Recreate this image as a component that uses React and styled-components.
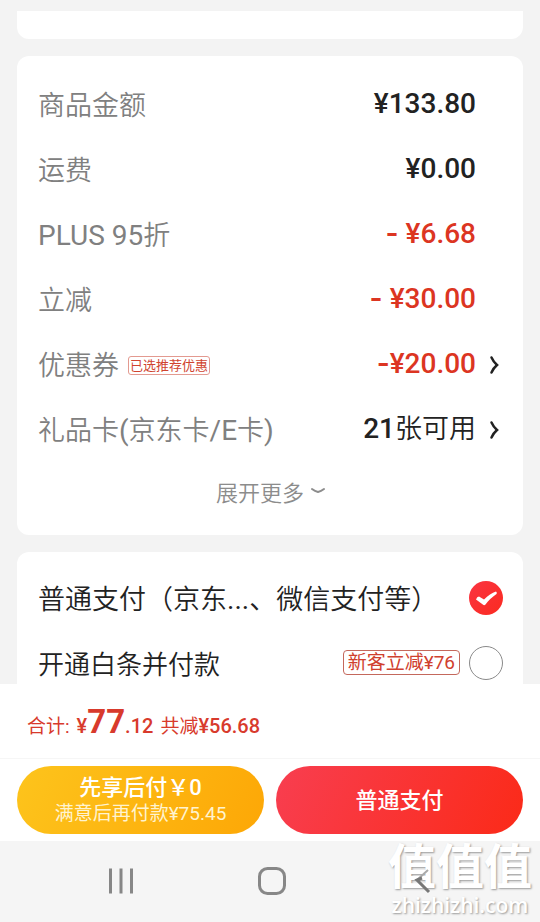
import { useState } from "react";
import styled, { createGlobalStyle } from "styled-components";

const fees = [
  { label: "商品金额", value: "¥133.80" },
  { label: "运费", value: "¥0.00" },
  { label: "PLUS 95折", minus: "- ", value: "¥6.68" },
  { label: "立减", minus: "- ", value: "¥30.00" },
  {
    label: "优惠券",
    tag: "已选推荐优惠",
    minus: "-",
    value: "¥20.00",
    link: true,
  },
  { label: "礼品卡(京东卡/E卡)", value: "21", unit: "张可用", link: true },
];

const methods = [
  { id: "normal", label: "普通支付（京东...、微信支付等）" },
  { id: "baitiao", label: "开通白条并付款", tag: "新客立减¥76", small: true },
];

// latin letters and digits are set a little heavier than the chinese text
const Mixed = ({ text }) =>
  text
    .split(/([\x20-\x7e]+)/)
    .map((part, i) => (i % 2 ? <Latin key={i}>{part}</Latin> : part));

const ArrowRight = () => (
  <svg width="14" height="20" viewBox="0 0 14 20" fill="none">
    <path
      d="M2.5 2.5 Q4.5 7 8 10 Q4.5 13 2.5 17.5"
      stroke="#222"
      strokeWidth="2.5"
      strokeLinecap="round"
    />
  </svg>
);

const ArrowDown = () => (
  <svg width="14" height="8" viewBox="0 0 14 8" fill="none">
    <path
      d="M1 2 Q4 4.2 7 5 Q10 4.2 13 2"
      stroke="#8c8c8c"
      strokeWidth="2"
      strokeLinecap="round"
    />
  </svg>
);

const App = () => {
  const [method, setMethod] = useState("normal");

  return (
    <Screen>
      <GlobalStyle />
      <Content>
        <PreviousCard />
        <FeeCard>
          {fees.map((fee) => (
            <Row key={fee.label}>
              <Label>
                <Mixed text={fee.label} />
              </Label>
              {fee.tag && <CouponTag>{fee.tag}</CouponTag>}
              <Value $red={fee.minus}>
                {fee.minus && <Minus>{fee.minus}</Minus>}
                {fee.value}
                {fee.unit && <Unit>{fee.unit}</Unit>}
              </Value>
              <More>
                {fee.link && (
                  <ArrowButton type="button" aria-label={fee.label}>
                    <ArrowRight />
                  </ArrowButton>
                )}
              </More>
            </Row>
          ))}
          <Expand type="button">
            展开更多
            <ArrowDown />
          </Expand>
        </FeeCard>
        <MethodCard>
          {methods.map((item) => (
            <Method key={item.id}>
              <MethodName $small={item.small}>
                <Mixed text={item.label} />
              </MethodName>
              {item.tag && <PromoTag>{item.tag}</PromoTag>}
              <Choice>
                <Radio
                  type="radio"
                  name="method"
                  value={item.id}
                  checked={method === item.id}
                  onChange={() => setMethod(item.id)}
                />
                {method === item.id && (
                  <Tick viewBox="0 0 34 34">
                    <path d="M7 18.5 Q8 15.5 10 15.5 L15 18.5 C19 14.5 23 11.8 27 10.5 Q28.5 11.5 27.5 13 C23 16 19 20 16.5 23.5 Q15.2 24.8 13.8 23.5 Z" />
                  </Tick>
                )}
              </Choice>
            </Method>
          ))}
        </MethodCard>
      </Content>

      <Footer>
        <Total>
          <span>合计:</span>
          <Amount>
            ¥<Big>77</Big>.12
          </Amount>
          <span>
            共减<Amount>¥56.68</Amount>
          </span>
        </Total>
        <Actions>
          <PayButton type="button" $from="#fdc41c" $to="#fda706">
            <strong>先享后付￥0</strong>
            <small>满意后再付款¥75.45</small>
          </PayButton>
          <PayButton type="button" $from="#f83e50" $to="#fb2a18">
            <strong>普通支付</strong>
          </PayButton>
        </Actions>
      </Footer>

      <NavBar>
        <NavButton type="button" aria-label="最近">
          <svg width="28" height="28" viewBox="0 0 28 28">
            <path
              d="M3.5 1.5 V26.5 M14 1.5 V26.5 M24.5 1.5 V26.5"
              stroke="#878787"
              strokeWidth="3"
            />
          </svg>
        </NavButton>
        <NavButton type="button" aria-label="主页">
          <svg width="28" height="28" viewBox="0 0 28 28" fill="none">
            <rect
              x="1.5"
              y="1.5"
              width="25"
              height="25"
              rx="8"
              stroke="#878787"
              strokeWidth="3"
            />
          </svg>
        </NavButton>
        <NavButton type="button" aria-label="返回">
          <svg width="28" height="28" viewBox="0 0 28 28" fill="none">
            <path d="M19 3 L8 13" stroke="#aaa" strokeWidth="2" />
            <path d="M13 11 L8 13 L20 25" stroke="#777" strokeWidth="3" />
          </svg>
        </NavButton>
        <Watermark>
          <WatermarkName>值值值</WatermarkName>
          <WatermarkSite>zhizhizhi.com</WatermarkSite>
        </Watermark>
      </NavBar>
    </Screen>
  );
};

const GlobalStyle = createGlobalStyle`
  * {
    box-sizing: border-box;
  }

  body {
    margin: 0;
    background: #f3f3f3;
    font-family: Roboto, "Noto Sans CJK SC", sans-serif;
  }

  button {
    padding: 0;
    border: 0;
    background: none;
    font-family: inherit;
    cursor: pointer;
  }
`;

const Screen = styled.div`
  display: flex;
  flex-direction: column;
  height: 100vh;
`;

const Content = styled.main`
  display: flex;
  flex: 1;
  flex-direction: column;
  gap: 17px;
  min-height: 0;
  padding: 11px 17px 0;
  overflow: hidden;
`;

const Card = styled.section`
  flex-shrink: 0;
  border-radius: 12px;
  background: #fff;
`;

const FeeCard = styled(Card)`
  padding: 17px 20px 18px 21px;
`;

const MethodCard = styled(Card)`
  padding: 13px 20px 13px 21px;
`;

const PreviousCard = styled.div`
  flex-shrink: 0;
  height: 28px;
  border-radius: 0 0 12px 12px;
  background: #fff;
`;

const Row = styled.div`
  display: flex;
  align-items: center;
  height: 65px;
`;

const Label = styled.span`
  color: #808080;
  font-size: 27px;
  font-weight: 350;
  line-height: 40px;
`;

const Latin = styled.span`
  font-size: 28px;
  font-weight: 400;
`;

const CouponTag = styled.span`
  margin-left: 9px;
  padding: 0 1px;
  border: 1px solid #e39a90;
  border-radius: 3px;
  color: #d0432f;
  font-size: 13px;
  line-height: 17px;
`;

const Value = styled.span`
  margin-left: auto;
  padding-bottom: 4px;
  color: ${({ $red }) => ($red ? "#dc3522" : "#222")};
  font-size: 28px;
  font-weight: 500;
  line-height: 40px;
  white-space: pre;
`;

const Minus = styled.span`
  font-family: Inter, sans-serif;
  font-weight: 600;
`;

const Unit = styled.span`
  font-size: 27px;
  font-weight: 350;
`;

const More = styled.span`
  display: flex;
  justify-content: flex-end;
  width: 27px;
  padding-bottom: 2px;
`;

const ArrowButton = styled.button`
  display: flex;
`;

const Expand = styled.button`
  display: flex;
  align-items: center;
  justify-content: center;
  gap: 7px;
  width: 100%;
  height: 54px;
  padding-top: 2px;
  color: #8c8c8c;
  font-size: 22px;
  font-weight: 350;
`;

const Method = styled.label`
  display: flex;
  align-items: center;
  height: 65px;
`;

const MethodName = styled.span`
  padding-top: 4px;
  color: #222;
  font-size: ${({ $small }) => ($small ? "26px" : "27px")};
  font-weight: 350;
  line-height: 40px;
  white-space: nowrap;
`;

const PromoTag = styled.span`
  margin-left: auto;
  padding: 0 4px;
  border: 1px solid #c4685c;
  border-radius: 4px;
  color: #d0402e;
  font-size: 19px;
  line-height: 23px;
`;

const Choice = styled.span`
  display: grid;
  margin-left: auto;

  ${PromoTag} + & {
    margin-left: 9px;
  }
`;

const Radio = styled.input`
  grid-area: 1 / 1;
  width: 34px;
  height: 34px;
  margin: 0;
  border: 1px solid #8a8a8a;
  border-radius: 50%;
  appearance: none;

  &:checked {
    border: 0;
    background: linear-gradient(135deg, #fa3542, #fb2a20);
  }
`;

const Tick = styled.svg`
  grid-area: 1 / 1;
  width: 34px;
  height: 34px;
  fill: #fff;
  pointer-events: none;
`;

const Footer = styled.footer`
  background: #fff;
`;

const Total = styled.div`
  display: flex;
  align-items: baseline;
  gap: 7px;
  height: 75px;
  padding: 18px 27px 0;
  border-bottom: 1px solid #f6f6f6;
  color: #d83a2c;
  font-size: 19px;
  line-height: 40px;
`;

const Amount = styled.span`
  font-size: 20px;
  font-weight: 500;
`;

const Big = styled.b`
  font-size: 33px;
`;

const Actions = styled.div`
  display: grid;
  grid-template-columns: 1fr 1fr;
  gap: 12px;
  padding: 7px 17px;
`;

const PayButton = styled.button`
  display: flex;
  flex-direction: column;
  align-items: center;
  justify-content: center;
  height: 68px;
  padding-top: 2px;
  border-radius: 34px;
  background: linear-gradient(
    115deg,
    ${({ $from }) => $from},
    ${({ $to }) => $to}
  );
  color: #fff;

  strong {
    font-size: 22px;
    font-weight: 500;
    line-height: 26px;
  }

  small {
    color: #fff3cf;
    font-size: 19px;
    line-height: 26px;
  }
`;

const NavBar = styled.nav`
  position: relative;
  display: grid;
  grid-template-columns: repeat(3, 151px);
  justify-content: center;
  height: 81px;
  padding: 0 0 2px 3px;
  background: #f5f5f5;
`;

const NavButton = styled.button`
  z-index: 1;
  display: flex;
  align-items: center;
  justify-content: center;
`;

const Watermark = styled.div`
  position: absolute;
  right: 8px;
  bottom: 5px;
  color: #fff;
  text-align: center;
  text-shadow: 1px 1px 2px #999;
  pointer-events: none;
`;

const WatermarkName = styled.div`
  font-size: 48px;
  font-weight: 700;
  line-height: 50px;
`;

const WatermarkSite = styled.div`
  font-family: "Open Sans", sans-serif;
  font-size: 21px;
  font-weight: 600;
  line-height: 24px;
`;

export default App;
